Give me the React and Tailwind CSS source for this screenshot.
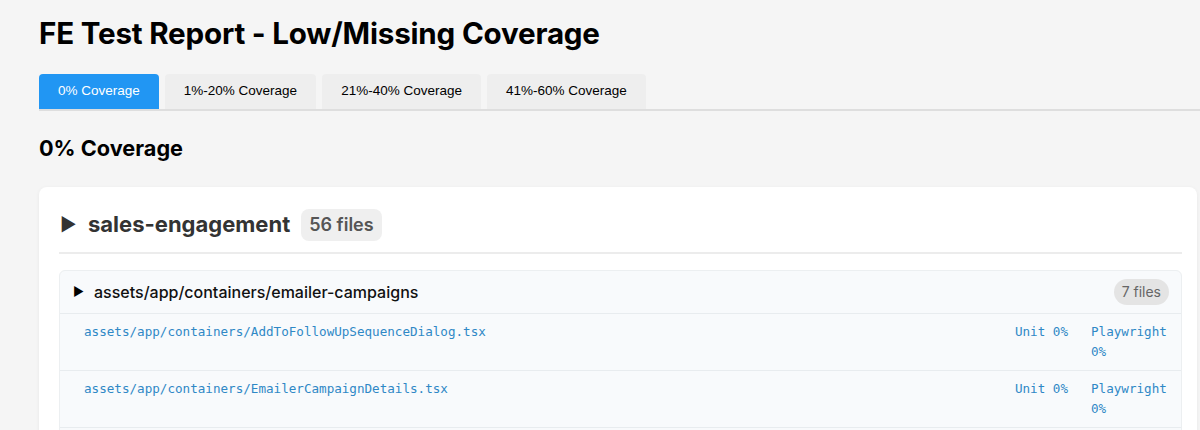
import React, { useState } from 'react';

const tabs = ['0% Coverage', '1%-20% Coverage', '21%-40% Coverage', '41%-60% Coverage'];

const files = [
  'assets/app/containers/AddToFollowUpSequenceDialog.tsx',
  'assets/app/containers/EmailerCampaignDetails.tsx',
  'assets/app/containers/EmailerCampaignList.tsx',
];

function FileRow({ path }) {
  return (
    <div className="flex items-start justify-between border-b border-[#e8ecef] pl-6 pr-[14px] py-2 text-[12.6px] leading-5 text-[#2f88c6] font-['DejaVu_Sans_Mono',monospace]">
      <a href="#" className="truncate">{path}</a>
      <div className="flex gap-[23px] shrink-0">
        <span>Unit 0%</span>
        <span className="w-[76px]">Playwright 0%</span>
      </div>
    </div>
  );
}

function Folder() {
  return (
    <div className="mt-4 rounded-md border border-[#eceff1] bg-[#f8fafc] overflow-hidden">
      <div className="flex items-center justify-between h-[43px] pl-[13px] pr-3 border-b border-[#e8ecef]">
        <div className="flex items-center gap-[10px]">
          <span className="text-[12px] text-black">▶</span>
          <span className="text-[16px] font-medium text-[#111] font-['Inter',sans-serif]">assets/app/containers/emailer-campaigns</span>
        </div>
        <span className="rounded-full bg-[#e4e4e4] px-2 py-[3px] text-[14px] leading-5 text-[#666] font-['Inter',sans-serif]">7 files</span>
      </div>
      {files.map((f) => (
        <FileRow key={f} path={f} />
      ))}
    </div>
  );
}

export default function App() {
  const [active, setActive] = useState(0);

  return (
    <div className="min-h-screen bg-[#f5f5f5] pl-[39px] pr-[3px] pt-[14px] font-['Inter',sans-serif]">
      <h1 className="text-[29.6px] leading-[38px] font-bold text-black tracking-[-0.2px]">FE Test Report - Low/Missing Coverage</h1>

      <div className="mt-[22px] -mr-[3px] flex gap-[6px] border-b-2 border-[#dedede] font-['Liberation_Sans',sans-serif]">
        {tabs.map((t, i) => (
          <button
            key={t}
            onClick={() => setActive(i)}
            className={
              i === active
                ? 'h-[35px] px-[19px] rounded-t-[4px] bg-[#2196f3] text-white text-[13.5px]'
                : 'h-[35px] px-[19px] rounded-t-[4px] bg-[#eeeeee] text-black text-[13.5px]'
            }
          >
            {t}
          </button>
        ))}
      </div>

      <h2 className="mt-[22px] text-[21.7px] leading-[30px] font-bold text-black">0% Coverage</h2>

      <div className="mt-[24px] rounded-lg bg-white shadow-[0_1px_4px_rgba(0,0,0,0.06)] pl-5 pr-[15px] pt-[21px] pb-6">
        <div className="flex items-center gap-3 pb-[11px] border-b-2 border-[#ececec]">
          <span className="text-[18px] text-[#333] w-[16px] ml-[1px]">▶</span>
          <span className="text-[22px] font-bold text-[#333]">sales-engagement</span>
          <span className="ml-[-1px] rounded-lg bg-[#efefef] px-2 py-[3px] text-[18px] leading-[26px] font-semibold text-[#555]">56 files</span>
        </div>
        <Folder />
      </div>
    </div>
  );
}
